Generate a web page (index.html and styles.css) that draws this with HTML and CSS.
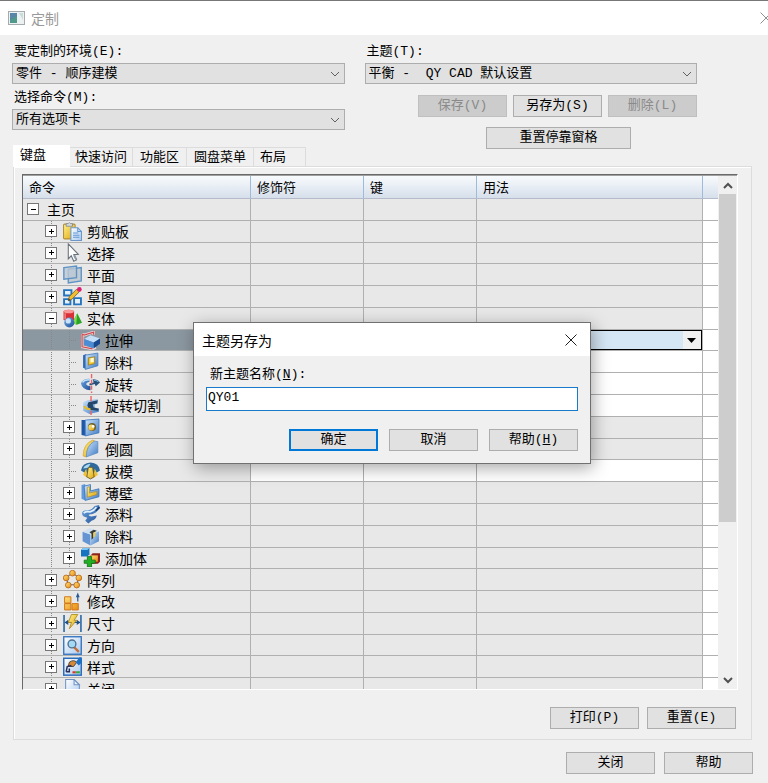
FILE: index.html
```
<!DOCTYPE html>
<html lang="zh-CN">
<head>
    <meta charset="UTF-8">
    <meta name="viewport" content="width=device-width, initial-scale=1.0">
    <title>定制</title>
    <link rel="stylesheet" href="styles.css">
</head>
<body>
    <!-- shared gradients for the command icons -->
    <svg class="defs" width="0" height="0" aria-hidden="true">
        <defs>
            <linearGradient id="blue" x1="0" y1="0" x2="1" y2="1"><stop offset="0" stop-color="#cfe6fb"/><stop offset="1" stop-color="#3f7ac4"/></linearGradient>
            <linearGradient id="deep" x1="0" y1="0" x2="1" y2="1"><stop offset="0" stop-color="#6fa8e4"/><stop offset="1" stop-color="#1f4f94"/></linearGradient>
            <linearGradient id="gold" x1="0" y1="0" x2="1" y2="1"><stop offset="0" stop-color="#fff08a"/><stop offset="1" stop-color="#e0a510"/></linearGradient>
            <linearGradient id="orange" x1="0" y1="0" x2="1" y2="1"><stop offset="0" stop-color="#ffe07a"/><stop offset="1" stop-color="#e88a10"/></linearGradient>
            <linearGradient id="paper" x1="0" y1="0" x2="1" y2="1"><stop offset="0" stop-color="#ffffff"/><stop offset="1" stop-color="#a9c9ef"/></linearGradient>
        </defs>
    </svg>

    <div class="window">
        <header class="titlebar">
            <svg class="app-icon" viewBox="0 0 17 14"><rect x=".5" y=".5" width="16" height="13" fill="#eef1f2" stroke="#a4acb0"/><rect x="2" y="2" width="7" height="10" fill="#4f9a8a"/><path d="M2 2h7v3L2 9z" fill="#5a86a8"/><path d="M11 2h4v7z" fill="#c8dcd8"/></svg>
            <h1>定制</h1>
            <button class="close" aria-label="关闭窗口"><svg viewBox="0 0 12 12"><path d="M.5.5l11 11M11.5.5l-11 11" fill="none" stroke="#909090"/></svg></button>
        </header>

        <section class="options">
            <div class="column">
                <label for="env">要定制的环境(E):</label>
                <select id="env"><option>零件 - 顺序建模</option></select>
                <label for="cmd">选择命令(M):</label>
                <select id="cmd"><option>所有选项卡</option></select>
            </div>
            <div class="column">
                <label for="theme">主题(T):</label>
                <select id="theme"><option>平衡 -&nbsp; QY CAD 默认设置</option></select>
                <div class="theme-buttons">
                    <button class="btn" disabled>保存(V)</button>
                    <button class="btn">另存为(S)</button>
                    <button class="btn" disabled>删除(L)</button>
                </div>
                <div class="dock-button">
                    <button class="btn wide">重置停靠窗格</button>
                </div>
            </div>
        </section>

        <nav class="tabs" role="tablist">
            <button class="tab active" role="tab" aria-selected="true">键盘</button>
            <button class="tab" role="tab">快速访问</button>
            <button class="tab" role="tab">功能区</button>
            <button class="tab" role="tab">圆盘菜单</button>
            <button class="tab" role="tab">布局</button>
        </nav>

        <main class="panel">
            <div class="list">
                <div class="list-view">
                    <table>
                        <colgroup>
                            <col class="col-command">
                            <col class="col-key">
                            <col class="col-key">
                            <col>
                            <col class="col-end">
                        </colgroup>
                        <thead>
                            <tr><th>命令</th><th>修饰符</th><th>键</th><th>用法</th><th></th></tr>
                        </thead>
                        <tbody>
                            <tr>
                                <td><div class="node"><span class="slot"><button class="toggle open" aria-label="折叠"></button></span><span class="text">主页</span></div></td>
                                <td></td><td></td><td></td><td></td>
                            </tr>
                            <tr>
                                <td><div class="node"><span class="slot"></span><span class="slot line"><button class="toggle" aria-label="展开"></button></span>
                                    <svg class="icon" viewBox="0 0 18 18"><rect x=".5" y="2" width="11" height="14" rx="1" fill="url(#gold)" stroke="#b09038"/><path d="M3 3V1.500h2Q6-.5 7 1.500h2V4H3z" fill="#d5dbe0" stroke="#808890" stroke-width=".8"/><path d="M7.500 5.500h6.500l3.500 3.500v8.500h-10z" fill="url(#paper)" stroke="#6c96c8"/><path d="M14 5.500V9h3.500M9.500 10.500h5M9.500 12.500h6M9.500 14.500h6" fill="none" stroke="#6098d4"/></svg>
                                    <span class="text">剪贴板</span></div></td>
                                <td></td><td></td><td></td><td></td>
                            </tr>
                            <tr>
                                <td><div class="node"><span class="slot"></span><span class="slot line"><button class="toggle" aria-label="展开"></button></span>
                                    <svg class="icon" viewBox="0 0 18 18"><path d="M5 .8l9.500 10-4.200.2 2.500 5-2.600 1.300-2.400-5.200L5 15z" fill="#fdfdfe" stroke="#68717a"/><path d="M10.500 11.500l2 4" stroke="#8798a8" stroke-width="2"/></svg>
                                    <span class="text">选择</span></div></td>
                                <td></td><td></td><td></td><td></td>
                            </tr>
                            <tr>
                                <td><div class="node"><span class="slot"></span><span class="slot line"><button class="toggle" aria-label="展开"></button></span>
                                    <svg class="icon" viewBox="0 0 18 18"><path d="M5 4l12.300-1.500v12.500L5 17z" fill="#c3cbd3" stroke="#5e92c4" stroke-width="1.300"/><path d="M.8 2.500l12-1.500v11L.8 13.500z" fill="#bcc8d4" fill-opacity=".8" stroke="#5e92c4" stroke-width="1.300"/></svg>
                                    <span class="text">平面</span></div></td>
                                <td></td><td></td><td></td><td></td>
                            </tr>
                            <tr>
                                <td><div class="node"><span class="slot"></span><span class="slot line"><button class="toggle" aria-label="展开"></button></span>
                                    <svg class="icon" viewBox="0 0 18 18"><path d="M1 3h7v5H1zM1 11.500h6v5H1zM10.500 10.500H17v6h-6.500z" fill="#e6f1fa" stroke="#2475c0" stroke-width="1.800"/><path d="M5 13l1-4 7-7 2.500 2.500-7 7z" fill="#f0bd30" stroke="#746230" stroke-width=".8"/><path d="M5 13l.5-2 1.500 1.500z" fill="#333"/><circle cx="15.500" cy="2.300" r="2.200" fill="#dd1c72"/></svg>
                                    <span class="text">草图</span></div></td>
                                <td></td><td></td><td></td><td></td>
                            </tr>
                            <tr>
                                <td><div class="node"><span class="slot"></span><span class="slot line"><button class="toggle open" aria-label="折叠"></button></span>
                                    <svg class="icon" viewBox="0 0 18 18"><path d="M13.500 4l4.500 9-5 2-4-2z" fill="#2ca428"/><path d="M13.500 4l-1 11-3.500-2z" fill="#85dc4e"/><path d="M.5 2Q5-.5 10.500 2v8.500q-5 2-10 0z" fill="#d93038"/><ellipse cx="5.500" cy="2.300" rx="4.800" ry="1.700" fill="#f59a98"/><path d="M2 4v6" stroke="#f08080" stroke-width="1.500"/><circle cx="6" cy="12.800" r="4.800" fill="url(#deep)"/><circle cx="5" cy="11.300" r="2.500" fill="#c8e2f8"/></svg>
                                    <span class="text">实体</span></div></td>
                                <td></td><td></td><td></td><td></td>
                            </tr>
                            <tr class="command selected">
                                <td><div class="node"><span class="slot"></span><span class="slot line"></span><span class="slot line leaf"></span>
                                    <svg class="icon" viewBox="0 0 18 18"><path d="M1 3l2 .8L12 1v2.500M1 3v12l10 2 3-1.500" fill="none" stroke="#f0dede" stroke-width="2.500"/><path d="M1 3l2 .8L12 1v2.500M1 3v12l10 2" fill="none" stroke="#d34c52" stroke-width="1.200"/><path d="M3 7.500l6-3.500 9 3-6 4z" fill="#c3def7"/><path d="M3 7.500l9 3.500v5.500l-9-3.500z" fill="#4b8cd8"/><path d="M12 11l6-4v5l-6 4.500z" fill="#174a8e"/></svg>
                                    <span class="text">拉伸</span></div></td>
                                <td></td><td></td>
                                <td class="editing"><select aria-label="用法"><option></option></select></td>
                                <td></td>
                            </tr>
                            <tr class="command">
                                <td><div class="node"><span class="slot"></span><span class="slot line"></span><span class="slot line leaf"></span>
                                    <svg class="icon" viewBox="0 0 18 18"><path d="M2 3l3-1v14l-3-1z" fill="#2c63ae"/><path d="M4 3l12-2v12L4 16.500z" fill="url(#blue)" stroke="#487fbc" stroke-width=".8"/><path d="M7 5.500l6-1v6.500l-6 1.500z" fill="#f4c720" stroke="#8b7530" stroke-width=".7"/><path d="M9 6l3-.5v4L9 10z" fill="#fffbe8"/></svg>
                                    <span class="text">除料</span></div></td>
                                <td></td><td></td><td></td><td></td>
                            </tr>
                            <tr class="command">
                                <td><div class="node"><span class="slot"></span><span class="slot line"></span><span class="slot line leaf"></span>
                                    <svg class="icon" viewBox="0 0 18 18"><path d="M0 9Q1 4.500 8 4.500v3Q4.500 8 5 10q1 1.500 4 1.500v4Q1 15 0 9z" fill="url(#deep)"/><path d="M1.500 8Q3 5.500 8 5.500" fill="none" stroke="#c2e3fa" stroke-width="1.500"/><path d="M11 5q5 0 7 3l-4 3.500-1-2-5 1.500v-2l4-1z" fill="#26517d"/><path d="M12 6q3 0 4.500 1.500" fill="none" stroke="#7db4de"/><path d="M10 0v18" stroke="#f06060" stroke-width="1.300" stroke-dasharray="4 1.500"/></svg>
                                    <span class="text">旋转</span></div></td>
                                <td></td><td></td><td></td><td></td>
                            </tr>
                            <tr class="command">
                                <td><div class="node"><span class="slot"></span><span class="slot line"></span><span class="slot line leaf"></span>
                                    <svg class="icon" viewBox="0 0 18 18"><path d="M2 6l4-2 10-1v4l-3 1v3l4 1v3l-9 2-6-3z" fill="url(#blue)"/><path d="M7 6l9-2-1 3-4 1 1 3 5 1-1 2-8-1-2-4z" fill="#24466a"/><path d="M3 9.500q1 3 6 3" fill="none" stroke="#e5bb2b" stroke-width="2"/><path d="M9.500 0v5m0 9v4" stroke="#f06060" stroke-width="1.300"/></svg>
                                    <span class="text">旋转切割</span></div></td>
                                <td></td><td></td><td></td><td></td>
                            </tr>
                            <tr>
                                <td><div class="node"><span class="slot"></span><span class="slot line"></span><span class="slot line"><button class="toggle" aria-label="展开"></button></span>
                                    <svg class="icon" viewBox="0 0 18 18"><path d="M.5 2H5v15l-4.500-1z" fill="#1d57a8"/><path d="M4 2l13-1v13L4 17z" fill="url(#blue)" stroke="#3e78bd" stroke-width=".8"/><circle cx="10.500" cy="8.500" r="3.800" fill="#705f32"/><circle cx="9.800" cy="9" r="2.800" fill="url(#gold)"/><circle cx="11.500" cy="8" r="1.300" fill="#fff"/></svg>
                                    <span class="text">孔</span></div></td>
                                <td></td><td></td><td></td><td></td>
                            </tr>
                            <tr>
                                <td><div class="node"><span class="slot"></span><span class="slot line"></span><span class="slot line"><button class="toggle" aria-label="展开"></button></span>
                                    <svg class="icon" viewBox="0 0 18 18"><path d="M2 16Q2 5 11 1l2 1Q5 6 5 17z" fill="url(#gold)" stroke="#cc9e20" stroke-width=".6"/><path d="M5 17Q5 6 13 2l3 .5V13z" fill="url(#blue)" stroke="#5486c0" stroke-width=".6"/></svg>
                                    <span class="text">倒圆</span></div></td>
                                <td></td><td></td><td></td><td></td>
                            </tr>
                            <tr class="command">
                                <td><div class="node"><span class="slot"></span><span class="slot line"></span><span class="slot line leaf"></span>
                                    <svg class="icon" viewBox="0 0 18 18"><path d="M0 9Q1 2 9 1.500 17 2 18 9l-3 2H3z" fill="#2e6a9c"/><path d="M2 7Q4 3 9 2.500l-2 4z" fill="#a9d8f0"/><path d="M5 7l-3 6 4 3zM13 7l3 6-4 3z" fill="#efc234"/><path d="M7 6h4l1.500 9L9 17l-3.500-2z" fill="url(#gold)" stroke="#60511f" stroke-width=".8"/></svg>
                                    <span class="text">拔模</span></div></td>
                                <td></td><td></td><td></td><td></td>
                            </tr>
                            <tr>
                                <td><div class="node"><span class="slot"></span><span class="slot line"></span><span class="slot line"><button class="toggle" aria-label="展开"></button></span>
                                    <svg class="icon" viewBox="0 0 18 18"><path d="M.5 2L4 1v15.500L.5 15z" fill="#5f9ade"/><path d="M3 3l6-1.500v6l8-2V13L4 16.500z" fill="url(#blue)" stroke="#3974b9" stroke-width=".8"/><path d="M6 4l2-.5v6L15 8v3l-9 2.500z" fill="url(#gold)" stroke="#a98524" stroke-width=".6"/></svg>
                                    <span class="text">薄壁</span></div></td>
                                <td></td><td></td><td></td><td></td>
                            </tr>
                            <tr>
                                <td><div class="node"><span class="slot"></span><span class="slot line"></span><span class="slot line"><button class="toggle" aria-label="展开"></button></span>
                                    <svg class="icon" viewBox="0 0 18 18"><path d="M1 8q0-3 5-3 4 0 7-4l4-1 1 3-4 4q-3 2-6 2-2 1 2 2l5-1q-1 4-5 5l-3 2.500L4 15l2-3Q1 11 1 8z" fill="url(#deep)"/><path d="M2.500 7.500q3-2 6-1 4-1 6-4.500" fill="none" stroke="#e0f0fd" stroke-width="1.800"/><path d="M14 5.500L17.500 2" stroke="#173c70" stroke-width="1.500"/></svg>
                                    <span class="text">添料</span></div></td>
                                <td></td><td></td><td></td><td></td>
                            </tr>
                            <tr>
                                <td><div class="node"><span class="slot"></span><span class="slot line"></span><span class="slot line"><button class="toggle" aria-label="展开"></button></span>
                                    <svg class="icon" viewBox="0 0 18 18"><path d="M1.500 4.500L9 7v10.500l-7.500-4z" fill="#6594d2"/><path d="M9 7l8-3v9.500l-8 4z" fill="url(#blue)"/><path d="M1.500 4.500L8 1l9 3-8 3z" fill="#cfe0f2"/><path d="M8 5l4-2.500 3 1-3 2V10l-2 2V6.500z" fill="#383c38"/><path d="M11.500 5.500l2-1v4l-2 2z" fill="#f1cc4a"/></svg>
                                    <span class="text">除料</span></div></td>
                                <td></td><td></td><td></td><td></td>
                            </tr>
                            <tr>
                                <td><div class="node"><span class="slot"></span><span class="slot line"></span><span class="slot line"><button class="toggle" aria-label="展开"></button></span>
                                    <svg class="icon" viewBox="0 0 18 18"><path d="M0 2l2-2h6v6L6 8H0z" fill="#1673c0"/><path d="M0 2l2-2h6L6 2z" fill="#7cc4f4"/><path d="M9 7l2-2h7v8l-2 2H9z" fill="#8e221c"/><path d="M9 7h7v6H9z" fill="url(#orange)"/><path d="M6 8h4v3.500h3.500v3H10V18H6v-3.500H3v-3h3z" fill="#21b022" stroke="#0c6814" stroke-width=".7"/></svg>
                                    <span class="text">添加体</span></div></td>
                                <td></td><td></td><td></td><td></td>
                            </tr>
                            <tr>
                                <td><div class="node"><span class="slot"></span><span class="slot line"><button class="toggle" aria-label="展开"></button></span>
                                    <svg class="icon" viewBox="0 0 18 18"><path d="M9 3l6 4-2 7H5L3 7z" fill="none" stroke="#6a5c72"/><g fill="url(#orange)" stroke="#b86718" stroke-width=".8"><circle cx="9" cy="3" r="2.700"/><circle cx="15" cy="7.500" r="2.700"/><circle cx="13" cy="14.300" r="2.700"/><circle cx="5" cy="14.300" r="2.700"/><circle cx="3" cy="7.500" r="2.700"/></g></svg>
                                    <span class="text">阵列</span></div></td>
                                <td></td><td></td><td></td><td></td>
                            </tr>
                            <tr>
                                <td><div class="node"><span class="slot"></span><span class="slot line"><button class="toggle" aria-label="展开"></button></span>
                                    <svg class="icon" viewBox="0 0 18 18"><g fill="url(#orange)" stroke="#cf7415" stroke-width=".9"><path d="M1.500 4.500h6v6h-6zM1.500 11h6v6h-6zM8.500 11h6v6h-6z"/></g><path d="M14 9V3" stroke="#285a94" stroke-width="1.200"/><path d="M12.200 5L14 .5 15.800 5z" fill="#285a94"/></svg>
                                    <span class="text">修改</span></div></td>
                                <td></td><td></td><td></td><td></td>
                            </tr>
                            <tr>
                                <td><div class="node"><span class="slot"></span><span class="slot line"><button class="toggle" aria-label="展开"></button></span>
                                    <svg class="icon" viewBox="0 0 18 18"><path d="M1 1v16M17 1v16" stroke="#2866a8" stroke-width="1.500"/><path d="M2 8h14" stroke="#1d4e86"/><path d="M1.500 8L5 5.500v5zM16.500 8L13 5.500v5z" fill="#1d4e86"/><path d="M8 .5h6L10.500 6H13l-7 8 2-6H5z" fill="url(#gold)" stroke="#a98a1c" stroke-width=".8"/></svg>
                                    <span class="text">尺寸</span></div></td>
                                <td></td><td></td><td></td><td></td>
                            </tr>
                            <tr>
                                <td><div class="node"><span class="slot"></span><span class="slot line"><button class="toggle" aria-label="展开"></button></span>
                                    <svg class="icon" viewBox="0 0 18 18"><rect x=".7" y=".7" width="16.600" height="16.600" fill="url(#paper)" stroke="#3674c0" stroke-width="1.300"/><path d="M10.500 10.500l4.500 4.500" stroke="#c56f37" stroke-width="2.200"/><circle cx="8.500" cy="7.500" r="3.700" fill="#a2daf5" stroke="#526f90" stroke-width="1.300"/></svg>
                                    <span class="text">方向</span></div></td>
                                <td></td><td></td><td></td><td></td>
                            </tr>
                            <tr>
                                <td><div class="node"><span class="slot"></span><span class="slot line"><button class="toggle" aria-label="展开"></button></span>
                                    <svg class="icon" viewBox="0 0 18 18"><rect x=".7" y="1.200" width="16.600" height="16" fill="url(#paper)" stroke="#2c6cbc" stroke-width="1.400"/><path d="M6 5q4-3 7 0l-3 4-5 0z" fill="#d78a36" stroke="#3c3330" stroke-width=".8"/><path d="M12 5l4-5 2 1v4l-3 3z" fill="#1e70c4"/><path d="M3 14l1-5 4-1M3 14h3v-3" fill="none" stroke="#25305a" stroke-width="1.400"/><path d="M9 14.500h3" stroke="#e03028" stroke-width="2"/><path d="M12 14.500h4" stroke="#38a848" stroke-width="2"/></svg>
                                    <span class="text">样式</span></div></td>
                                <td></td><td></td><td></td><td></td>
                            </tr>
                            <tr>
                                <td><div class="node"><span class="slot"></span><span class="slot line"><button class="toggle" aria-label="展开"></button></span>
                                    <svg class="icon" viewBox="0 0 18 18"><path d="M2.500.500h8l5 5v12h-13z" fill="url(#paper)" stroke="#7294c4"/><path d="M10.500.500v5h5z" fill="#e9f2fc" stroke="#7294c4"/></svg>
                                    <span class="text">关闭</span></div></td>
                                <td></td><td></td><td></td><td></td>
                            </tr>
                        </tbody>
                    </table>
                </div>
                <div class="scrollbar">
                    <button aria-label="向上滚动"><svg viewBox="0 0 10 7"><path d="M1 6l4-4 4 4" fill="none" stroke="#505050" stroke-width="2"/></svg></button>
                    <div class="thumb"></div>
                    <div class="track"></div>
                    <button aria-label="向下滚动"><svg viewBox="0 0 10 7"><path d="M1 1l4 4 4-4" fill="none" stroke="#505050" stroke-width="2"/></svg></button>
                </div>
            </div>
            <div class="panel-buttons">
                <button class="btn">打印(P)</button>
                <button class="btn">重置(E)</button>
            </div>
        </main>

        <footer class="footer">
            <button class="btn">关闭</button>
            <button class="btn">帮助</button>
        </footer>
    </div>

    <div class="dialog" role="dialog" aria-labelledby="dialog-title">
        <div class="dialog-title">
            <h2 id="dialog-title">主题另存为</h2>
            <button class="close" aria-label="关闭对话框"><svg viewBox="0 0 12 12"><path d="M.5.5l11 11M11.5.5l-11 11" fill="none" stroke="#202020"/></svg></button>
        </div>
        <div class="dialog-body">
            <label for="name">新主题名称(<u>N</u>):</label>
            <input type="text" id="name" value="QY01">
            <div class="dialog-buttons">
                <button class="btn default">确定</button>
                <button class="btn">取消</button>
                <button class="btn">帮助(<u>H</u>)</button>
            </div>
        </div>
    </div>
</body>
</html>
```
FILE: styles.css
```
* {
    box-sizing: border-box;
}
body {
    margin: 0;
    background: #f0f0f0;
    color: #000;
    font-family: "Liberation Mono", "Noto Sans CJK SC", monospace;
    font-size: 13px;
}
button, select, input {
    font: inherit;
    color: inherit;
    border-radius: 0;
}
.defs {
    position: absolute;
}
.window {
    display: flex;
    flex-direction: column;
    height: 100vh;
    min-height: 480px;
    overflow: hidden;
}

/* Title bar */
.titlebar {
    display: flex;
    align-items: center;
    flex: none;
    height: 35px;
    padding-left: 8px;
    border-top: 1px solid #777;
    background: #fff;
}
.app-icon {
    width: 17px;
    height: 14px;
    margin-right: 6px;
}
h1, h2 {
    flex: 1;
    margin: 0;
    font-family: "Noto Sans CJK SC", sans-serif;
    font-size: 14px;
    font-weight: normal;
    line-height: 20px;
}
h1 {
    color: #999;
}
.close {
    display: flex;
    padding: 0;
    border: 0;
    background: none;
}
.close svg {
    width: 12px;
    height: 12px;
}
.titlebar .close {
    margin-right: -4px;
}

/* Environment and theme */
.options {
    display: grid;
    grid-template-columns: 1fr 1fr;
    gap: 20px;
    flex: none;
    padding: 8px 71px 0 12px;
}
.column label {
    display: block;
    height: 18px;
    margin-bottom: 2px;
    padding-left: 2px;
    line-height: 18px;
}
.column select {
    display: block;
    width: 100%;
    height: 21px;
    margin-bottom: 5px;
    padding: 0 20px 0 3px;
    border: 1px solid #adadad;
    appearance: none;
    background: #e1e1e1 url("data:image/svg+xml,%3Csvg xmlns='http://www.w3.org/2000/svg' width='10' height='6'%3E%3Cpath d='M1 1l4 4 4-4' fill='none' stroke='%23606060'/%3E%3C/svg%3E") no-repeat right 4px center;
}
.btn {
    width: 89px;
    height: 22px;
    padding: 0;
    border: 1px solid #adadad;
    background: #e1e1e1;
    line-height: 20px;
}
.btn:disabled {
    border-color: #bfbfbf;
    background: #ccc;
    color: #8a8a8a;
}
.btn.wide {
    width: 145px;
}
.theme-buttons {
    display: flex;
    justify-content: flex-end;
    gap: 6px;
    margin-top: 11px;
}
.dock-button {
    display: flex;
    justify-content: flex-end;
    margin-top: 10px;
    padding-right: 66px;
}

/* Tabs */
.tabs {
    display: flex;
    align-items: flex-end;
    align-self: flex-start;
    flex: none;
    margin: -4px 0 -1px 13px;
}
.tab {
    height: 20px;
    padding: 0 5px;
    border: 1px solid #dcdcdc;
    border-left: 0;
    border-bottom: 0;
    background: #f0f0f0;
    line-height: 18px;
}
.tab:nth-child(3), .tab:nth-child(4) {
    padding: 0 7px;
}
.tab:last-child {
    padding: 0 19px 0 6px;
}
.tab.active {
    z-index: 1;
    height: 22px;
    padding: 0 23px 2px 7px;
    border-color: #fff;
    background: #fff;
}

/* Command list */
.panel {
    display: flex;
    flex: 1;
    flex-direction: column;
    min-height: 0;
    margin: 0 16px 0 13px;
    padding: 7px 13px 10px 8px;
    border: 1px solid #dcdcdc;
    box-shadow: inset 1px 1px #fff;
}
.list {
    display: flex;
    flex: 1;
    min-height: 0;
    border: 1px solid;
    border-color: #696969 #fff #fff #696969;
    box-shadow: inset 0 1px #a0a0a0;
    padding-top: 1px;
}
.list-view {
    flex: 1;
    overflow: hidden;
    background: #fff;
}
table {
    width: 100%;
    height: 524px;
    border-collapse: separate;
    border-spacing: 0;
    table-layout: fixed;
    font-family: "Noto Sans CJK SC", sans-serif;
    font-size: 14px;
}
.col-command {
    width: 228px;
}
.col-key {
    width: 113px;
}
.col-end {
    width: 15px;
}
th {
    height: 23px;
    padding: 0 5px 1px 6px;
    border-right: 1px solid #9ebbdb;
    border-bottom: 1px solid #b4bccb;
    background: linear-gradient(#f8fbfd, #d6dfeb);
    font-size: 13px;
    font-weight: normal;
    line-height: 18px;
    text-align: left;
}
td {
    padding: 0;
    border-right: 1px solid #b0b0b0;
    border-bottom: 1px solid #b0b0b0;
    background: #e8e8e8;
}
th:last-child, td:last-child {
    border-right: 0;
}
td:last-child, .command td {
    background: #fff;
}
.command td:first-child {
    background: #e8e8e8;
}
.selected td:first-child {
    background: #8c98a1;
}
.node {
    display: flex;
    align-items: center;
    height: 20px;
    padding-left: 1px;
}
.slot {
    display: flex;
    align-items: center;
    justify-content: center;
    flex: none;
    width: 18px;
    height: 20px;
}
.line {
    background: repeating-linear-gradient(#888 0 1px, transparent 1px 2px) 9px 0 / 1px 100% no-repeat;
}
.leaf {
    background:
        repeating-linear-gradient(#888 0 1px, transparent 1px 2px) 9px 0 / 1px 100% no-repeat,
        repeating-linear-gradient(90deg, #888 0 1px, transparent 1px 2px) 9px 10px / 8px 1px no-repeat;
}
.toggle {
    width: 12px;
    height: 12px;
    padding: 0;
    border: 1px solid #767676;
    background:
        linear-gradient(#000, #000) center / 5px 1px no-repeat,
        linear-gradient(#000, #000) center / 1px 5px no-repeat,
        #fff;
}
.toggle.open {
    background: linear-gradient(#000, #000) center / 5px 1px no-repeat, #fff;
}
.icon {
    flex: none;
    width: 19px;
    height: 19px;
    margin-left: 3px;
}
.text {
    margin-left: 5px;
    line-height: 20px;
    white-space: nowrap;
}
.editing select {
    display: block;
    width: 100%;
    height: 20px;
    border: solid #000;
    border-width: 1px 1px 1px 0;
    appearance: none;
    background:
        url("data:image/svg+xml,%3Csvg xmlns='http://www.w3.org/2000/svg' width='18' height='18'%3E%3Cpath fill='%23f0f0f0' d='M0 0h18v18H0z'/%3E%3Cpath d='M4 7h9l-4.500 5z'/%3E%3C/svg%3E") no-repeat right center,
        #d5e6f4;
}
.scrollbar {
    display: flex;
    flex-direction: column;
    flex: none;
    width: 19px;
    padding: 0 1px;
    background: #f0f0f0;
}
.scrollbar button {
    display: flex;
    align-items: center;
    justify-content: center;
    flex: none;
    height: 18px;
    padding: 0;
    border: 0;
    background: none;
}
.scrollbar svg {
    width: 10px;
    height: 7px;
}
.thumb {
    flex: 11;
    background: #cdcdcd;
}
.track {
    flex: 5;
}

/* Bottom buttons */
.panel-buttons {
    display: flex;
    justify-content: flex-end;
    flex: none;
    gap: 8px;
    margin-top: 17px;
    padding-right: 2px;
}
.footer {
    display: flex;
    justify-content: flex-end;
    flex: none;
    gap: 9px;
    padding: 12px 15px 9px;
}

/* Save as dialog */
.dialog {
    position: absolute;
    top: 322px;
    left: 193px;
    width: 398px;
    border: 1px solid #707070;
    background: #f0f0f0;
    box-shadow: 2px 4px 16px rgba(0, 0, 0, .35);
}
.dialog-title {
    display: flex;
    align-items: center;
    height: 33px;
    padding: 0 13px 0 8px;
    background: #fff;
}
.dialog-body {
    padding: 10px 12px 12px;
}
.dialog-body label {
    display: block;
    padding-left: 4px;
    line-height: 18px;
}
.dialog-body input {
    width: 100%;
    height: 24px;
    margin-top: 3px;
    padding: 0 1px 3px;
    border: 1px solid #1979ca;
    background: #fff;
    outline: 0;
}
.dialog-buttons {
    display: flex;
    justify-content: flex-end;
    gap: 11px;
    margin-top: 18px;
}
.btn.default {
    border: 2px solid #0078d7;
    line-height: 18px;
}
```
